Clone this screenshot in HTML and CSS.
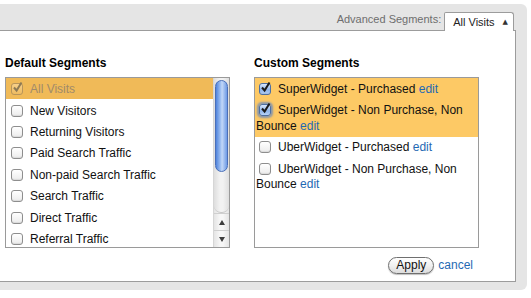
FILE: index.html
```html
<!DOCTYPE html>
<html>
<head>
<meta charset="utf-8">
<link rel="stylesheet" href="styles.css">
</head>
<body>
<div class="frame">
  <div class="topbar">
    <span class="adv-label">Advanced Segments:</span>
    <div class="tab">All Visits<span class="tab-arrow">▲</span></div>
  </div>
  <div class="panel">
    <div class="cols">
      <section class="col">
        <h3 class="col-title">Default Segments</h3>
        <div class="listbox">
          <ul class="dlist">
            <li class="ditem sel-default dis"><span class="cb cb-dis"><svg viewBox="0 0 14 14" width="14" height="14"><path d="M3 6.5 L5.6 9.5 L10.5 1.5" fill="none" stroke="#8d7a55" stroke-width="2"/></svg></span>All Visits</li>
            <li class="ditem"><span class="cb"></span>New Visitors</li>
            <li class="ditem"><span class="cb"></span>Returning Visitors</li>
            <li class="ditem"><span class="cb"></span>Paid Search Traffic</li>
            <li class="ditem"><span class="cb"></span>Non-paid Search Traffic</li>
            <li class="ditem"><span class="cb"></span>Search Traffic</li>
            <li class="ditem"><span class="cb"></span>Direct Traffic</li>
            <li class="ditem"><span class="cb"></span>Referral Traffic</li>
          </ul>
          <div class="scrollbar">
            <div class="track"><div class="thumb"></div></div>
            <div class="arrow"><span class="tri tri-up"></span></div>
            <div class="arrow"><span class="tri tri-down"></span></div>
          </div>
        </div>
      </section>
      <section class="col">
        <h3 class="col-title">Custom Segments</h3>
        <div class="listbox clist">
          <div class="cgroup sel-custom">
            <div class="citem"><span class="cb cb-on"><svg viewBox="0 0 14 14" width="14" height="14"><path d="M3 6.5 L5.6 9.5 L10.5 1.5" fill="none" stroke="#1a1a1a" stroke-width="2"/></svg></span><span>SuperWidget - Purchased</span> <a class="link">edit</a></div>
            <div class="citem"><span class="cb cb-on cb-focus"><svg viewBox="0 0 14 14" width="14" height="14"><path d="M3 6.5 L5.6 9.5 L10.5 1.5" fill="none" stroke="#1a1a1a" stroke-width="2"/></svg></span><span>SuperWidget - Non Purchase, Non</span> <span>Bounce</span> <a class="link">edit</a></div>
          </div>
          <div class="citem"><span class="cb"></span><span>UberWidget - Purchased</span> <a class="link">edit</a></div>
          <div class="citem"><span class="cb"></span><span>UberWidget - Non Purchase, Non</span> <span>Bounce</span> <a class="link">edit</a></div>
        </div>
      </section>
    </div>
    <div class="actions">
      <button class="apply">Apply</button>
      <a class="link cancel">cancel</a>
    </div>
  </div>
</div>
</body>
</html>
```

FILE: styles.css
```css
* { box-sizing: border-box; }
html, body { margin: 0; padding: 0; background: #fff; }
body {
  font-family: "Liberation Sans", Arial, sans-serif;
  font-size: 12px;
  color: #111;
}
.frame {
  margin-top: 4px;
  width: 527px;
  background: #e5e5e5;
  border-radius: 0 6px 6px 0;
  padding: 0 11px 8px 0;
}
.topbar {
  height: 26px;
  display: flex;
  justify-content: flex-end;
  align-items: flex-end;
  padding-right: 2px;
}
.adv-label {
  font-size: 11px;
  color: #6e6e6e;
  margin-right: 3px;
  margin-bottom: 5px;
}
.tab {
  position: relative;
  z-index: 1;
  white-space: nowrap;
  height: 19px;
  margin-bottom: -1px;
  padding: 2px 5px 0 8px;
  line-height: 15px;
  font-size: 11px;
  color: #222;
  background: #fff;
  border: 1px solid #9c9c9c;
  border-bottom: none;
  border-radius: 2px 3px 0 0;
}
.tab-arrow {
  display: inline-block;
  margin-left: 8px;
  font-family: "DejaVu Sans", sans-serif;
  font-size: 7px;
  line-height: 15px;
  vertical-align: top;
  color: #333;
}
.panel {
  background: #fff;
  border-top: 1px solid #9c9c9c;
  border-right: 1px solid #9c9c9c;
  border-bottom: 1px solid #9c9c9c;
  height: 252px;
  padding-left: 5px;
}
.cols {
  display: flex;
  gap: 24px;
  padding-top: 24px;
}
.col { width: 225px; }
.col-title {
  margin: 0 0 6px;
  font-size: 12px;
  line-height: 16px;
  font-weight: bold;
  color: #000;
}
.listbox {
  height: 171px;
  border: 1px solid #9a9a9a;
  overflow: hidden;
  display: flex;
}
.dlist {
  list-style: none;
  margin: 0;
  padding: 0;
  flex: 1;
}
.ditem {
  height: 21.4px;
  display: flex;
  align-items: center;
  padding-left: 5px;
  padding-top: 1px;
  color: #111;
  white-space: nowrap;
}
.ditem .cb { margin-right: 7px; }
.sel-default { background: #f0ba58; }
.dis { color: #a08a6a; }
.cb {
  position: relative;
  display: inline-block;
  flex: none;
  width: 12px;
  height: 12px;
  border: 1px solid #8e8e8e;
  border-radius: 3px;
  background: linear-gradient(#ffffff, #ececec);
  box-shadow: inset 0 -1px 1px rgba(0,0,0,0.08);
}
.cb svg {
  position: absolute;
  left: -1px;
  top: -3px;
}
.cb-dis {
  border-color: #b8955a;
  background: linear-gradient(#f7d08a, #eebb60);
  box-shadow: none;
}
.cb-on {
  border-color: #4d6fa3;
  background: linear-gradient(#d8e7fb, #8fb4ea 60%, #b8d2f6);
}
.cb-focus {
  box-shadow: 0 0 2px 2px rgba(90, 130, 200, 0.7);
}
.scrollbar {
  width: 16px;
  flex: none;
  display: flex;
  flex-direction: column;
  background: linear-gradient(90deg, #e4e4e4, #f7f7f7 40%, #f7f7f7 60%, #e4e4e4);
  border-left: 1px solid #d6d6d6;
}
.track {
  flex: 1;
  padding: 2px 1px 0 1px;
  border-bottom: 1px solid #c8c8c8;
  border-radius: 0 0 7px 7px;
  background: linear-gradient(90deg, #dedede, #f2f2f2 40%, #f2f2f2 60%, #dedede);
}
.thumb {
  height: 92px;
  border-radius: 7px;
  border: 1px solid #4a6fb8;
  background: linear-gradient(90deg, #4f83dc, #a7c6f4 45%, #c3d8f8 55%, #6d9ae5);
}
.arrow {
  height: 17px;
  display: flex;
  align-items: center;
  justify-content: center;
  border-top: 1px solid #cfcfcf;
}
.tri {
  width: 0; height: 0;
  border-left: 3.5px solid transparent;
  border-right: 3.5px solid transparent;
}
.tri-up { border-bottom: 5px solid #3e3e3e; }
.tri-down { border-top: 5px solid #3e3e3e; }
.clist {
  display: block;
}
.sel-custom { background: #fdc965; }
.citem {
  padding: 3px 0 3px 1px;
  line-height: 15.5px;
  color: #111;
}
.citem:first-child { padding-top: 3.5px; }
.citem .cb {
  vertical-align: -2px;
  margin: 0 7px 0 3px;
}
.link {
  color: #1f69b3;
  text-decoration: none;
}
.actions {
  display: flex;
  justify-content: flex-end;
  align-items: center;
  gap: 4px;
  margin-top: 9px;
  padding-right: 42px;
}
.apply {
  font-family: "Liberation Sans", Arial, sans-serif;
  font-size: 12px;
  color: #111;
  width: 46px;
  height: 17px;
  padding: 0;
  line-height: 15px;
  border: 1px solid #6f6f6f;
  border-radius: 9px;
  background: linear-gradient(#ffffff, #f1f1f1 50%, #dcdcdc);
  box-shadow: 0 1px 1px rgba(0,0,0,0.25);
}
.cancel { line-height: 15px; }
```
